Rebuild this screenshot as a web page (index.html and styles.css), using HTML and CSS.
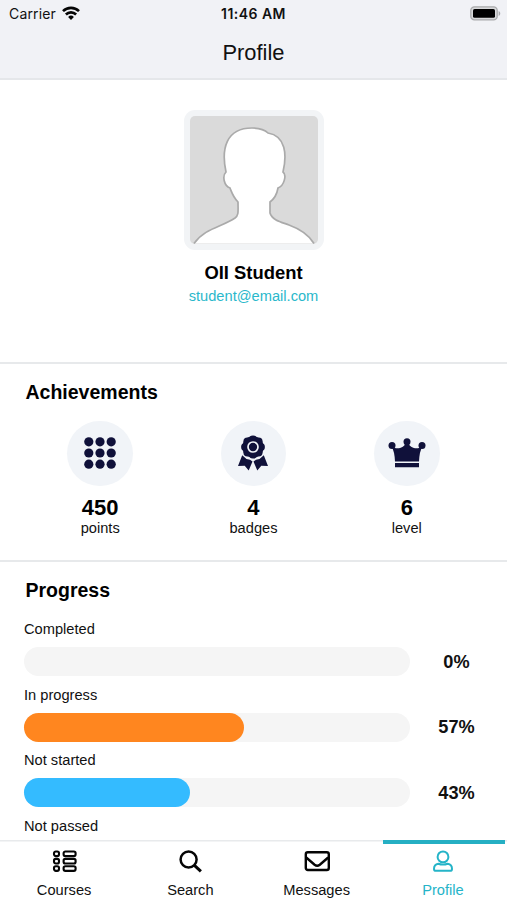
FILE: index.html
```html
<!DOCTYPE html>
<html lang="en">
<head>
<meta charset="utf-8">
<title>Profile</title>
<link rel="stylesheet" href="styles.css">
</head>
<body>
<div class="app">
  <header class="header">
    <div class="status">
      <div class="carrier"><span>Carrier</span>
        <svg class="wifi" width="18" height="14" viewBox="0 0 18 14" fill="none" stroke="#050505" stroke-width="2.6"><path d="M1 5.1a11.5 11.5 0 0 1 16 0M3.9 8.5a7.2 7.2 0 0 1 10.2 0"/><path d="M9 14l-2.9-3a4.100 4.100 0 0 1 5.800 0z" fill="#050505" stroke="none"/></svg>
      </div>
      <div class="time">11:46 AM</div>
      <svg class="battery" width="31" height="15" viewBox="0 0 31 15"><rect x=".8" y=".8" width="26.4" height="13" rx="3.6" fill="#d8d9db" stroke="#a9aaac" stroke-width="1.3"/><rect x="3" y="3" width="22" height="8.8" rx="1.6" fill="#000"/><path d="M28.6 5v5c2.2-.8 2.2-4.2 0-5z" fill="#a9aaac"/></svg>
    </div>
    <h1 class="title">Profile</h1>
  </header>

  <main class="content">
    <section class="user">
      <svg class="avatar" width="140" height="140" viewBox="0 0 140 140">
        <rect width="140" height="140" rx="11" fill="#f2f4f6"/>
        <rect x="6" y="6" width="128" height="128" rx="5" fill="#dadada"/>
        <path d="M10 133.500C21 118 38 117 51 108C55 105 54 101 54 92C49 87 48 83 46 78C40 76 38 66 42 62C37 39 42 18 68 18C76 18 81 20 84 23C102 26 103 45 99 62C103 65 100 76 94 78C93 84 90 89 86 92L86 103C88 110 97 112 105 115C116 119 125 125 130 133.500" fill="#fff" stroke="#aaa" stroke-width="1.700"/>
      </svg>
      <h2 class="name">OII Student</h2>
      <div class="email">student@email.com</div>
    </section>

    <section class="achievements">
      <h3 class="heading">Achievements</h3>
      <div class="stats">
        <div class="stat">
          <div class="disc"><svg width="32" height="32" viewBox="0 0 32 32" fill="#10113a"><circle cx="4.800" cy="4.800" r="4.600"/><circle cx="16" cy="4.800" r="4.600"/><circle cx="27.200" cy="4.800" r="4.600"/><circle cx="4.800" cy="16" r="4.600"/><circle cx="16" cy="16" r="4.600"/><circle cx="27.200" cy="16" r="4.600"/><circle cx="4.800" cy="27.200" r="4.600"/><circle cx="16" cy="27.200" r="4.600"/><circle cx="27.200" cy="27.200" r="4.600"/></svg></div>
          <b class="value">450</b><span class="unit">points</span>
        </div>
        <div class="stat">
          <div class="disc"><svg width="32" height="36" viewBox="0 0 32 36" fill="#10113a"><path d="M5.200 20.200L9.500 24l3.500.7 2.500 1.800-3.800 9-4-4.800-6.700.3zM26.800 20.200L22.500 24 19 24.700l-2.500 1.800 3.800 9 4-4.800 6.700.3z"/><g><circle cx="16" cy="12" r="10.700"/><circle cx="16" cy="4.500" r="4.100"/><circle cx="21.500" cy="6.500" r="4.100"/><circle cx="23.800" cy="12" r="4.100"/><circle cx="21.500" cy="17.500" r="4.100"/><circle cx="16" cy="19.500" r="4.100"/><circle cx="10.500" cy="17.500" r="4.100"/><circle cx="8.200" cy="12" r="4.100"/><circle cx="10.500" cy="6.500" r="4.100"/></g><circle cx="16" cy="12" r="5" fill="none" stroke="#f1f4f8" stroke-width="1.700"/></svg></div>
          <b class="value">4</b><span class="unit">badges</span>
        </div>
        <div class="stat">
          <div class="disc"><svg width="38" height="30" viewBox="0 0 38 30" fill="#10113a"><circle cx="4" cy="7.500" r="3.500"/><circle cx="19" cy="3.700" r="3.500"/><circle cx="34" cy="7.500" r="3.500"/><path d="M3.500 8.500C8 11.500 15.500 11 17.600 5h2.800C22.500 11 30 11.500 34.500 8.500Q31.500 13 31 23.500H7Q6.500 13 3.500 8.500zM7 25h24v4.300H7z"/></svg></div>
          <b class="value">6</b><span class="unit">level</span>
        </div>
      </div>
    </section>

    <section class="progress">
      <h3 class="heading">Progress</h3>
      <div class="label">Completed</div>
      <div class="row"><div class="track"></div><b class="percent">0%</b></div>
      <div class="label">In progress</div>
      <div class="row"><div class="track"><div class="fill orange" style="width:57%"></div></div><b class="percent">57%</b></div>
      <div class="label">Not started</div>
      <div class="row"><div class="track"><div class="fill blue" style="width:43%"></div></div><b class="percent">43%</b></div>
      <div class="label">Not passed</div>
    </section>
  </main>

  <nav class="tabs">
    <a class="tab"><svg width="26" height="24" viewBox="0 0 26 24" fill="none" stroke="#050505" stroke-width="2.100"><rect x="3" y="2.500" width="5" height="4.600" rx="1.800"/><rect x="12.600" y="2.500" width="12" height="4.600" rx="1.800"/><rect x="3" y="9.900" width="5" height="4.600" rx="1.800"/><rect x="12.600" y="9.900" width="12" height="4.600" rx="1.800"/><rect x="3" y="17.300" width="5" height="4.600" rx="1.800"/><rect x="12.600" y="17.300" width="12" height="4.600" rx="1.800"/></svg><span>Courses</span></a>
    <a class="tab"><svg width="26" height="24" viewBox="0 0 26 24" fill="none" stroke="#050505"><circle cx="11.600" cy="10.500" r="8" stroke-width="2.500"/><path d="M17.400 16.300l6.500 6" stroke-width="3" /></svg><span>Search</span></a>
    <a class="tab"><svg width="26" height="24" viewBox="0 0 26 24" fill="none" stroke="#050505" stroke-width="2.400"><rect x="1.800" y="3.300" width="23" height="17.700" rx="2"/><path d="M2.200 8.500l8.400 7.200q2.600 2 5.200 0L24.200 8.500"/></svg><span>Messages</span></a>
    <a class="tab active"><svg width="26" height="24" viewBox="0 0 26 24" fill="none" stroke="#25b4c8" stroke-width="2"><circle cx="13" cy="7.900" r="5.400"/><path d="M8.300 14.800C5.500 15.200 4 17.400 4 19.900q0 1.900 2 1.900h14q2 0 2-1.900C22 17.400 20.500 15.200 17.700 14.800Q13 16.400 8.300 14.800z"/></svg><span>Profile</span></a>
  </nav>
</div>
</body>
</html>
```
FILE: styles.css
```css
* { box-sizing: border-box; }
body { margin: 0; background: #fff; color: #111; font: 14.65px/18px "Liberation Sans", sans-serif; }
h1, h2, h3 { margin: 0; }
svg { display: block; flex: none; }
.app { display: flex; flex-direction: column; height: 900px; overflow: hidden; }
.header { flex: none; height: 80px; background: #f1f2f6; border-bottom: 2px solid #e5e7ea; }
.status { display: grid; grid-template-columns: 1fr auto 1fr; align-items: center; height: 27px; padding: 0 6px 0 9px; font-family: Inter, sans-serif; font-size: 14px; }
.carrier { display: flex; align-items: center; gap: 6px; letter-spacing: .15px; }
.wifi { margin-top: -2px; }
.time { margin-left: -3px; font-weight: 600; font-size: 14px; letter-spacing: .45px; }
.battery { justify-self: end; }
.title { padding-top: 12.6px; font-size: 21.9px; line-height: 26px; font-weight: 400; text-align: center; }
.content { flex: 1; min-height: 0; overflow: hidden; }
.user { display: flex; flex-direction: column; align-items: center; height: 284px; padding-top: 30px; border-bottom: 2px solid #e7e9eb; }
.name { margin-top: 12px; color: #000; font-size: 18.4px; line-height: 22px; }
.email { margin-top: 3px; color: #2ab8cb; }
.achievements { height: 198px; padding-top: 16px; border-bottom: 2px solid #e7e9eb; }
.heading { padding-left: 25.5px; color: #000; font-size: 19.5px; line-height: 24px; }
.stats { display: grid; grid-template-columns: repeat(3, 153.3px); justify-content: center; margin-top: 16.5px; }
.stat { display: flex; flex-direction: column; align-items: center; }
.disc { display: flex; align-items: center; justify-content: center; width: 65.5px; height: 65.5px; border-radius: 50%; background: #f1f4f8; }
.value { margin-top: 9px; color: #000; font-size: 22px; line-height: 26px; }
.unit { margin-top: -1px; line-height: 16px; }
.progress { padding: 16px 0 0 24px; }
.progress .heading { padding-left: 1.5px; margin-bottom: 18px; }
.label { height: 18px; }
.row { display: flex; align-items: center; margin: 9px 0 9.5px; height: 29px; }
.track { flex: none; width: 386px; height: 29px; border-radius: 15px; background: #f5f5f5; }
.fill { height: 100%; border-radius: 15px; }
.orange { background: #ff861f; }
.blue { background: #34bbff; }
.percent { width: 93px; text-align: center; font-size: 18.2px; }
.tabs { flex: none; display: grid; grid-template-columns: repeat(4, 1fr); height: 60px; padding: 0 1px; background: #fff; box-shadow: inset 0 1.5px #e8eaec; }
.tab { display: flex; flex-direction: column; align-items: center; padding-top: 9px; color: #111; }
.tab span { margin-top: 8px; }
.active { margin: 0 1px 0 3px; padding-right: 2px; color: #25b4c8; box-shadow: inset 0 4px #25afc3; }
```
